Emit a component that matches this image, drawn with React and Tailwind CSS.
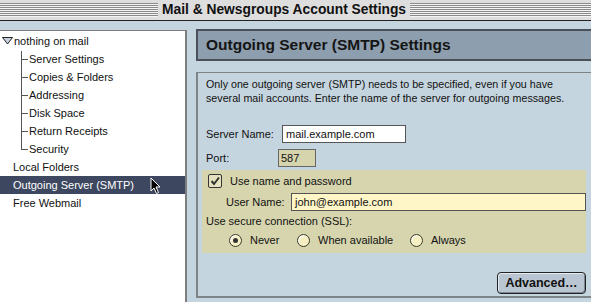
import React from 'react';

const stripes =
  'h-[14px] bg-[repeating-linear-gradient(to_bottom,#8a8a8a_0px,#8a8a8a_1px,#f4f4f4_1px,#f4f4f4_2px)]';

const tree = [
  { label: 'Server Settings', child: true },
  { label: 'Copies & Folders', child: true },
  { label: 'Addressing', child: true },
  { label: 'Disk Space', child: true },
  { label: 'Return Receipts', child: true },
  { label: 'Security', child: true, last: true },
  { label: 'Local Folders' },
  { label: 'Outgoing Server (SMTP)', selected: true },
  { label: 'Free Webmail' },
];

function Radio({ checked, label }) {
  return (
    <div className="flex items-center gap-[8px]">
      <span className="w-[13px] h-[13px] rounded-full border border-[#3a3a2a] bg-[#f6efc4] flex items-center justify-center shadow-[inset_1px_1px_0_#fff]">
        {checked && <span className="w-[5px] h-[5px] rounded-full bg-[#333]" />}
      </span>
      <span>{label}</span>
    </div>
  );
}

export default function App() {
  return (
    <div
      className="w-[591px] h-[302px] overflow-hidden bg-[#c5d5df] text-[#111] text-[11px] flex flex-col"
      style={{ fontFamily: '"Liberation Sans", Arial, sans-serif' }}
    >
      {/* Title bar */}
      <div className="h-[21px] shrink-0 bg-[#dedede] border-b border-[#222] flex items-center">
        <div className={stripes + ' w-[158px] shrink-0'} />
        <div className="px-[4px] text-[13.8px] font-bold leading-none text-[#111]">
          Mail &amp; Newsgroups Account Settings
        </div>
        <div className={stripes + ' flex-1'} />
      </div>

      <div className="flex flex-1 min-h-0">
        {/* Left tree panel */}
        <div className="relative w-[187px] shrink-0 mt-[9px] bg-white border-t border-r-2 border-[#7d7d7d] pt-[1px]">
          <div className="h-[18px] flex items-center pl-[2px]">
            <svg width="11" height="8" viewBox="0 0 11 8" className="mr-[1px]">
              <path d="M0.5 0.5 L10.5 0.5 L5.5 7 Z" fill="#c8d0e0" stroke="#222" strokeWidth="1" />
            </svg>
            <span>nothing on mail</span>
          </div>
          {/* vertical tree line */}
          <div className="absolute left-[21px] top-[20px] h-[98px] w-px bg-[#555]" />
          {tree.map((item) => (
            <div
              key={item.label}
              className={
                'h-[18px] flex items-center ' +
                (item.selected ? 'bg-[#3d4860] text-white ' : '') +
                (item.child ? 'pl-[21px]' : 'pl-[13px]')
              }
            >
              {item.child && <span className="w-[7px] h-px bg-[#555] mr-[1px]" />}
              <span>{item.label}</span>
            </div>
          ))}
          {/* mouse pointer */}
          <svg
            width="12"
            height="18"
            viewBox="0 0 12 18"
            className="absolute left-[150px] top-[146px]"
          >
            <path
              d="M1 1 L1 14 L4 11 L6.5 16.5 L8.5 15.5 L6 10 L10 10 Z"
              fill="#000"
              stroke="#fff"
              strokeWidth="1"
            />
          </svg>
        </div>

        {/* Right column */}
        <div className="ml-[9px] w-[405px] shrink-0 flex flex-col">
          <div className="mt-[8px] h-[32px] bg-[#8d9eae] border-t-2 border-l-2 border-b-2 border-t-[#4a4f58] border-l-[#4a4f58] border-b-[#4a4f58] flex items-center pl-[8px]">
            <span className="text-[15.5px] font-bold text-[#151515] leading-none">
              Outgoing Server (SMTP) Settings
            </span>
          </div>

          <div className="mt-[11px] flex-1 mb-[4px] border-t border-l-2 border-b-2 border-[#7d8488] pt-[4px] pl-[8px]">
            <p className="leading-[14px] text-[10.7px]">
              Only one outgoing server (SMTP) needs to be specified, even if you have
              <br />
              several mail accounts. Enter the name of the server for outgoing messages.
            </p>

            <div className="mt-[20px] flex items-center h-[18px]">
              <span className="w-[76px]">Server Name:</span>
              <div className="w-[124px] h-[18px] bg-white border border-[#555] flex items-center pl-[3px]">
                mail.example.com
              </div>
            </div>

            <div className="mt-[6px] flex items-center h-[18px]">
              <span className="w-[72px]">Port:</span>
              <div className="w-[38px] h-[18px] bg-[#d6d4ad] border border-[#666] flex items-center pl-[2px]">
                587
              </div>
            </div>

            <div className="-ml-[4px] mt-[3px] w-[384px] h-[83px] bg-[#d6d5ae] pl-[6px] pt-[4px]">
              <div className="flex items-center h-[14px]">
                <span className="w-[14px] h-[14px] rounded-[2px] border border-[#333] bg-[#e6e2bf] flex items-center justify-center">
                  <svg width="10" height="10" viewBox="0 0 10 10">
                    <path d="M1.5 5 L4 8 L9 1.5" fill="none" stroke="#333" strokeWidth="2" />
                  </svg>
                </span>
                <span className="ml-[8px]">Use name and password</span>
              </div>

              <div className="mt-[5px] flex items-center h-[18px] pl-[18px]">
                <span className="w-[65px]">User Name:</span>
                <div className="flex-1 h-[18px] bg-[#fff6c7] border border-[#555] flex items-center pl-[3px]">
                  john@example.com
                </div>
              </div>

              <div className="mt-[3px] h-[14px] flex items-center -ml-[2px]">
                Use secure connection (SSL):
              </div>

              <div className="mt-[5px] flex items-center h-[14px] pl-[21px]">
                <div className="w-[68px]">
                  <Radio checked label="Never" />
                </div>
                <div className="w-[113px]">
                  <Radio label="When available" />
                </div>
                <Radio label="Always" />
              </div>
            </div>

            <div className="mt-[19px] ml-[291px] w-[89px] h-[22px] rounded-[4px] border border-[#222] bg-[#b9c5d0] shadow-[inset_1px_1px_0_#e6edf2,inset_-1px_-1px_0_#7c8894] flex items-center justify-center text-[12.5px] font-bold leading-none">
              Advanced…
            </div>
          </div>
        </div>
      </div>
    </div>
  );
}
